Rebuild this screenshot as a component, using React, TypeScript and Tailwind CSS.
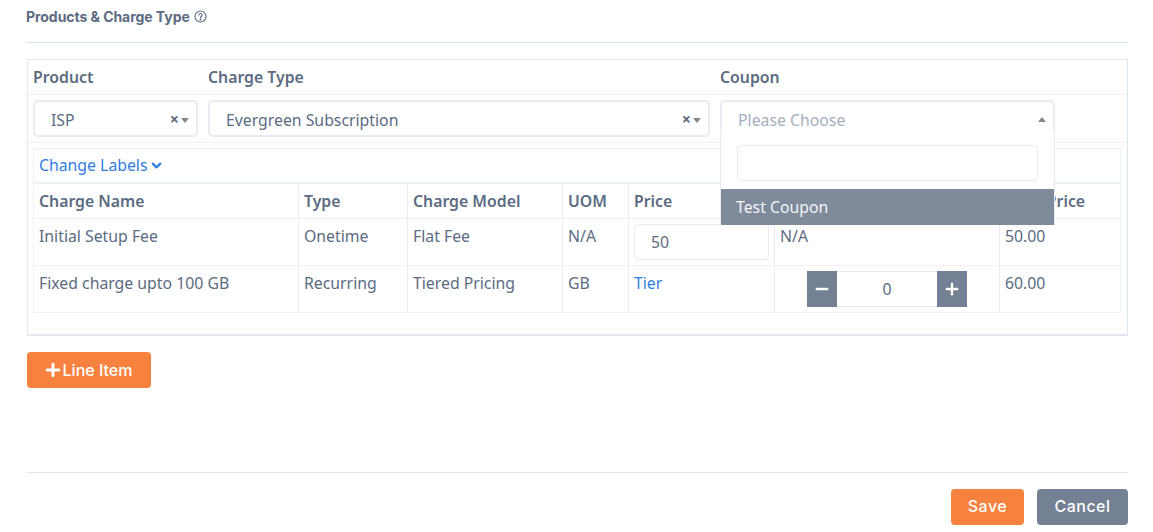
import React from "react";
import { ChevronDown, Plus, Minus } from "lucide-react";

const cols = "grid grid-cols-[265px_109px_155px_66px_146px_225px_122px]";

function Cell({ children, className = "" }: { children?: React.ReactNode; className?: string }) {
  return <div className={`border-r border-[#e9edf3] last:border-r-0 px-[5px] ${className}`}>{children}</div>;
}

function Arrows({ clear = true, up = false }: { clear?: boolean; up?: boolean }) {
  return (
    <span className="absolute right-[7px] top-[15px] flex items-center gap-[2px]">
      {clear && <span className="relative top-[-1px] text-[16px] leading-[6px] font-bold text-[#5f6b7d]">×</span>}
      {up ? (
        <span className="w-0 h-0 border-x-[4px] border-x-transparent border-b-[5px] border-b-[#888]" />
      ) : (
        <span className="w-0 h-0 border-x-[4px] border-x-transparent border-t-[5px] border-t-[#888]" />
      )}
    </span>
  );
}

export default function App() {
  return (
    <div className="relative w-[1153px] h-[532px] overflow-hidden bg-white pl-[26px] pr-[25px] font-['Noto_Sans',sans-serif] text-[15.8px] text-[#5b6b82]">
      <div className="h-[43px] border-b border-[#dbe5ec] pt-[7px]">
        <div className="flex items-center gap-[4px] h-[19px] font-['Inter',sans-serif] text-[14px] font-bold tracking-[-0.05px] text-[#5b6b82]">
          Products &amp; Charge Type
          <svg width="13" height="13" viewBox="0 0 16 16" fill="none" stroke="#5b6b82" strokeWidth="1.4">
            <circle cx="8" cy="8" r="6.8" />
            <path d="M6 6.2c0-1.2 1-1.9 2-1.9s2 .7 2 1.8c0 1.6-2 1.6-2 3.3" strokeLinecap="round" />
            <circle cx="8" cy="11.6" r=".5" fill="#5b6b82" />
          </svg>
        </div>
      </div>

      <div className="relative mt-[16px] ml-[1px] w-[1101px] h-[277px] border border-[#e3e9f1] border-b-2 border-b-[#e3e7ee] border-r-[#dde5ef]">
        <div className="flex h-[35px] border-b border-[#eef1f6] pl-[5px] pt-[6px] font-semibold text-[#5b6b82] leading-[22px]">
          <div className="w-[175px]">Product</div>
          <div className="w-[512px]">Charge Type</div>
          <div>Coupon</div>
        </div>
        <div className="flex h-[48px] border-b border-[#eef1f6] pl-[5px] pt-[5px] gap-[10px]">
          <div className="relative w-[165px] h-[37px] border-2 border-[#e8ebf2] rounded-[5px] pl-[16px] leading-[37px]">
            ISP
            <Arrows />
          </div>
          <div className="relative w-[502px] h-[37px] border-2 border-[#e8ebf2] rounded-[5px] pl-[16px] leading-[37px]">
            Evergreen Subscription
            <Arrows />
          </div>
          <div className="relative w-[335px] h-[37px] border-2 border-[#e8ebf2] border-b-0 rounded-t-[5px] pl-[16px] leading-[37px] text-[#a3afc0]">
            Please Choose
            <Arrows clear={false} up />
          </div>
        </div>

        <div className="ml-[5px] mt-[5px] w-[1088px] border border-[#eef1f6]">
          <div className="h-[35px] border-b-2 border-[#eef1f6] pl-[5px] flex items-center text-[#2f7de1]">
            Change Labels
            <ChevronDown size={15} strokeWidth={3.5} className="ml-[1px] text-[#2f7de1]" />
          </div>
          <div className={`${cols} h-[35px] border-b border-[#eef1f6] font-semibold leading-[35px]`}>
            <Cell>Charge Name</Cell>
            <Cell>Type</Cell>
            <Cell>Charge Model</Cell>
            <Cell>UOM</Cell>
            <Cell>Price</Cell>
            <Cell></Cell>
            <Cell>Total Price</Cell>
          </div>
          <div className={`${cols} h-[47px] border-b border-[#eef1f6] leading-[20px]`}>
            <Cell className="pt-[7px]">Initial Setup Fee</Cell>
            <Cell className="pt-[7px]">Onetime</Cell>
            <Cell className="pt-[7px]">Flat Fee</Cell>
            <Cell className="pt-[7px]">N/A</Cell>
            <Cell className="pt-[5px]">
              <div className="w-[135px] h-[36px] border border-[#e8ebf2] rounded-[4px] pl-[16px] leading-[35px]">50</div>
            </Cell>
            <Cell className="pt-[7px]">N/A</Cell>
            <Cell className="pt-[7px]">50.00</Cell>
          </div>
          <div className={`${cols} h-[46px] leading-[20px]`}>
            <Cell className="pt-[7px]">Fixed charge upto 100 GB</Cell>
            <Cell className="pt-[7px]">Recurring</Cell>
            <Cell className="pt-[7px]">Tiered Pricing</Cell>
            <Cell className="pt-[7px]">GB</Cell>
            <Cell className="pt-[7px] text-[#2f7de1]">Tier</Cell>
            <Cell className="pt-[5px] pl-[32px]">
              <div className="flex w-[160px] h-[36px]">
                <div className="w-[30px] bg-[#748093] flex items-center justify-center text-white">
                  <Minus size={18} strokeWidth={3.2} />
                </div>
                <div className="w-[100px] border-y border-[#e8ebf2] flex items-center justify-center">0</div>
                <div className="w-[30px] bg-[#748093] flex items-center justify-center text-white">
                  <Plus size={18} strokeWidth={3.2} />
                </div>
              </div>
            </Cell>
            <Cell className="pt-[7px]">60.00</Cell>
          </div>
        </div>

        <div className="absolute left-[692px] top-[70px] w-[335px] h-[95px] bg-white border-x border-[#e8ebf2] z-10">
          <div className="mt-[15px] ml-[16px] w-[301px] h-[36px] border border-[#e8ebf2] rounded-[4px]" />
          <div className="mt-[8px] h-[36px] bg-[#7f8a9b] pl-[15px] leading-[36px] text-[#f3f5f8]">Test Coupon</div>
        </div>
      </div>

      <button className="mt-[16px] ml-[1px] flex items-center justify-center w-[124px] h-[36px] rounded-[4px] bg-[#f7823f] text-white font-['Inter',sans-serif] text-[16px] font-medium pb-[1px]">
        <Plus size={20} strokeWidth={3.5} className="-ml-[3px]" />
        <span>Line Item</span>
      </button>

      <div className="mt-[84px] border-t border-[#e5e7ea] pt-[16px] flex justify-end gap-[13px]">
        <button className="w-[73px] h-[36px] rounded-[4px] bg-[#f7823f] text-white font-['Inter',sans-serif] text-[16px] font-medium tracking-[0.5px] pb-[2px]">Save</button>
        <button className="w-[91px] h-[36px] rounded-[4px] bg-[#748093] text-white font-['Inter',sans-serif] text-[16px] font-medium tracking-[0.5px] pb-[2px]">Cancel</button>
      </div>
    </div>
  );
}
